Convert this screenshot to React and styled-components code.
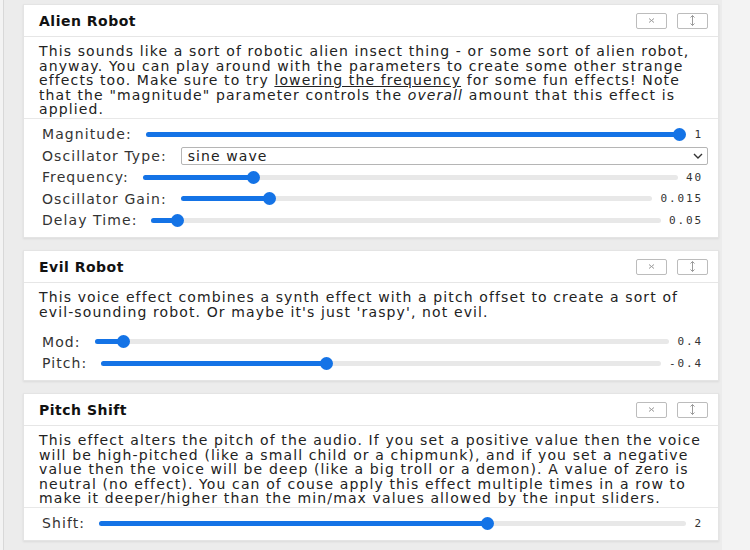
import styled, { createGlobalStyle } from "styled-components";

const GlobalStyle = createGlobalStyle`
  html, body {
    margin: 0;
    padding: 0;
    background: #f3f3f3;
  }
  body {
    font-family: "DejaVu Sans", "Liberation Sans", sans-serif;
    color: #222;
  }
`;

const Page = styled.div`
  width: 719px;
  min-height: 550px;
  box-sizing: border-box;
  margin-left: 3px;
  padding: 4px 0 0 19px;
  background: #ececec;
  border-left: 1px solid #d8d8d8;
  display: flex;
  flex-direction: column;
  gap: 12px;
`;

const Card = styled.section`
  width: 696px;
  background: #fff;
  border: 1px solid #e4e4e4;
  box-shadow: 0 1px 2px rgba(0, 0, 0, 0.08);
  box-sizing: border-box;
`;

const Header = styled.header`
  height: 31px;
  display: flex;
  align-items: center;
  justify-content: space-between;
  padding: 0 10px 0 15px;
  border-bottom: 1px solid #e6e6e6;
`;

const Title = styled.h2`
  margin: 0;
  font-size: 14px;
  letter-spacing: 0.5px;
  font-weight: bold;
  color: #111;
`;

const Buttons = styled.div`
  display: flex;
  gap: 10px;
`;

const IconButton = styled.button`
  width: 31px;
  height: 16px;
  padding: 0;
  display: flex;
  align-items: center;
  justify-content: center;
  background: #fff;
  border: 1px solid #bcbcbc;
  border-radius: 2px;
  color: #9a9a9a;
`;

const Description = styled.p`
  margin: 0;
  padding: ${(p) => (p.$last ? "7px 12px 7px 15px" : "7px 12px 1px 15px")};
  font-size: 14px;
  line-height: 14.5px;
  letter-spacing: 1.12px;
  color: #222;
  border-bottom: ${(p) => (p.$last ? "none" : "1px solid #e8e8e8")};

  u {
    text-decoration: underline;
  }
`;

const Controls = styled.div`
  padding: 5px 15px 6px 18px;
  display: flex;
  flex-direction: column;
`;

const Row = styled.div`
  height: 21.5px;
  display: flex;
  align-items: center;
  gap: 14px;
`;

const Label = styled.span`
  font-size: 14px;
  letter-spacing: 1.08px;
  color: #333;
  white-space: nowrap;
`;

const Track = styled.div`
  flex: 1;
  height: 5px;
  border-radius: 3px;
  background: #e8e8e8;
  position: relative;
`;

const Fill = styled.div`
  height: 100%;
  border-radius: 3px;
  background: #1473e6;
`;

const Thumb = styled.div`
  position: absolute;
  top: 50%;
  width: 13px;
  height: 13px;
  margin: -6.5px 0 0 -6.5px;
  border-radius: 50%;
  background: #1473e6;
`;

const Value = styled.span`
  margin-left: -6px;
  font-family: "DejaVu Sans Mono", "Liberation Mono", monospace;
  font-size: 11px;
  letter-spacing: 1.9px;
  color: #333;
  white-space: nowrap;
`;

const Select = styled.div`
  flex: 1;
  height: 18px;
  margin-right: -5px;
  box-sizing: border-box;
  border: 1px solid #b5b5b5;
  border-radius: 2px;
  display: flex;
  align-items: center;
  justify-content: space-between;
  padding: 0 4px 0 6px;
  font-size: 14px;
  letter-spacing: 1.08px;
  color: #222;
`;

function Slider({ label, value, pos }) {
  // thumb travels between radius and width - radius, like a native range
  const left = `calc(6.5px + (100% - 13px) * ${pos})`;
  return (
    <Row>
      <Label>{label}</Label>
      <Track>
        <Fill style={{ width: left }} />
        <Thumb style={{ left }} />
      </Track>
      <Value>{value}</Value>
    </Row>
  );
}

function CardHeader({ title }) {
  return (
    <Header>
      <Title>{title}</Title>
      <Buttons>
        <IconButton aria-label="remove">
          <svg width="9" height="9" viewBox="0 0 9 9">
            <path d="M2 2.5 L7 6.5 M7 2.5 L2 6.5" stroke="currentColor" strokeWidth="1" fill="none" />
          </svg>
        </IconButton>
        <IconButton aria-label="move">
          <svg width="9" height="13" viewBox="0 0 9 13">
            <path d="M4.5 1.5 V11.5 M2.5 3.5 L4.5 1.5 L6.5 3.5 M2.5 9.5 L4.5 11.5 L6.5 9.5" stroke="currentColor" strokeWidth="1" fill="none" />
          </svg>
        </IconButton>
      </Buttons>
    </Header>
  );
}

export default function App() {
  return (
    <>
      <GlobalStyle />
      <Page>
        <Card>
          <CardHeader title="Alien Robot" />
          <Description>
            This sounds like a sort of robotic alien insect thing - or some sort of alien robot,
            anyway. You can play around with the parameters to create some other strange
            effects too. Make sure to try <u>lowering the frequency</u> for some fun effects! Note
            that the "magnitude" parameter controls the <i>overall</i> amount that this effect is
            applied.
          </Description>
          <Controls>
            <Slider label="Magnitude:" value="1" pos={1} />
            <Row>
              <Label>Oscillator Type:</Label>
              <Select>
                <span>sine wave</span>
                <svg width="10" height="6" viewBox="0 0 10 6">
                  <path d="M1 1 L5 5 L9 1" stroke="#333" strokeWidth="1.4" fill="none" />
                </svg>
              </Select>
            </Row>
            <Slider label="Frequency:" value="40" pos={0.2} />
            <Slider label="Oscillator Gain:" value="0.015" pos={0.18} />
            <Slider label="Delay Time:" value="0.05" pos={0.04} />
          </Controls>
        </Card>

        <Card>
          <CardHeader title="Evil Robot" />
          <Description $last>
            This voice effect combines a synth effect with a pitch offset to create a sort of
            evil-sounding robot. Or maybe it's just 'raspy', not evil.
          </Description>
          <Controls>
            <Slider label="Mod:" value="0.4" pos={0.04} />
            <Slider label="Pitch:" value="-0.4" pos={0.4} />
          </Controls>
        </Card>

        <Card>
          <CardHeader title="Pitch Shift" />
          <Description>
            This effect alters the pitch of the audio. If you set a positive value then the voice
            will be high-pitched (like a small child or a chipmunk), and if you set a negative
            value then the voice will be deep (like a big troll or a demon). A value of zero is
            neutral (no effect). You can of couse apply this effect multiple times in a row to
            make it deeper/higher than the min/max values allowed by the input sliders.
          </Description>
          <Controls>
            <Slider label="Shift:" value="2" pos={0.665} />
          </Controls>
        </Card>
      </Page>
    </>
  );
}
